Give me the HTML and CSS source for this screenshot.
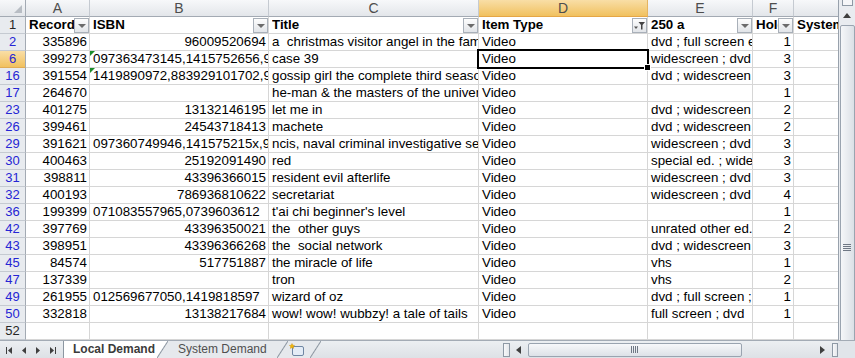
FILE: index.html
```html
<!DOCTYPE html>
<html lang="en">
<head>
    <meta charset="UTF-8">
    <title>Local Demand</title>
    <link rel="stylesheet" href="styles.css">
</head>
<body>
<div class="app">
    <div class="sheet">
        <div class="grid">
            <!-- column letters -->
            <div class="row letters">
                <div class="corner"></div>
                <div class="ch">A</div>
                <div class="ch">B</div>
                <div class="ch">C</div>
                <div class="ch on">D</div>
                <div class="ch">E</div>
                <div class="ch">F</div>
                <div class="ch">G</div>
            </div>
            <!-- header row -->
            <div class="row">
                <div class="rh dark">1</div>
                <div class="cell hd"><span class="t">Record</span><span class="fb"></span></div>
                <div class="cell hd"><span class="t">ISBN</span><span class="fb"></span></div>
                <div class="cell hd"><span class="t">Title</span><span class="fb"></span></div>
                <div class="cell hd"><span class="t">Item Type</span><span class="fb filt"><svg width="13" height="13" viewBox="0 0 13 13"><path d="M1 7.5h4l-2 2.5z" fill="#555"/><path d="M5.5 3h6.5l-2.5 3v4.5h-1.5v-4.5z" fill="#444"/></svg></span></div>
                <div class="cell hd"><span class="t">250 a</span><span class="fb"></span></div>
                <div class="cell hd"><span class="t">Holds</span><span class="fb"></span></div>
                <div class="cell hd"><span class="t">System Demand</span></div>
            </div>
            <div class="row">
                <div class="rh">2</div>
                <div class="cell num">335896</div>
                <div class="cell num">96009520694</div>
                <div class="cell">a  christmas visitor angel in the family</div>
                <div class="cell">Video</div>
                <div class="cell">dvd ; full screen edition</div>
                <div class="cell num">1</div>
                <div class="cell"></div>
            </div>
            <div class="row">
                <div class="rh on">6</div>
                <div class="cell num">399273</div>
                <div class="cell tri">097363473145,1415752656,9781415752657</div>
                <div class="cell">case 39</div>
                <div class="cell sel">Video</div>
                <div class="cell">widescreen ; dvd</div>
                <div class="cell num">3</div>
                <div class="cell"></div>
            </div>
            <div class="row">
                <div class="rh">16</div>
                <div class="cell num">391554</div>
                <div class="cell tri">1419890972,883929101702,9781419890973</div>
                <div class="cell">gossip girl the complete third season</div>
                <div class="cell">Video</div>
                <div class="cell">dvd ; widescreen</div>
                <div class="cell num">3</div>
                <div class="cell"></div>
            </div>
            <div class="row">
                <div class="rh">17</div>
                <div class="cell num">264670</div>
                <div class="cell"></div>
                <div class="cell">he-man &amp; the masters of the universe</div>
                <div class="cell">Video</div>
                <div class="cell"></div>
                <div class="cell num">1</div>
                <div class="cell"></div>
            </div>
            <div class="row">
                <div class="rh">23</div>
                <div class="cell num">401275</div>
                <div class="cell num">13132146195</div>
                <div class="cell">let me in</div>
                <div class="cell">Video</div>
                <div class="cell">dvd ; widescreen</div>
                <div class="cell num">2</div>
                <div class="cell"></div>
            </div>
            <div class="row">
                <div class="rh">26</div>
                <div class="cell num">399461</div>
                <div class="cell num">24543718413</div>
                <div class="cell">machete</div>
                <div class="cell">Video</div>
                <div class="cell">dvd ; widescreen</div>
                <div class="cell num">2</div>
                <div class="cell"></div>
            </div>
            <div class="row">
                <div class="rh">29</div>
                <div class="cell num">391621</div>
                <div class="cell">097360749946,141575215x,9781415752152</div>
                <div class="cell">ncis, naval criminal investigative service</div>
                <div class="cell">Video</div>
                <div class="cell">widescreen ; dvd</div>
                <div class="cell num">3</div>
                <div class="cell"></div>
            </div>
            <div class="row">
                <div class="rh">30</div>
                <div class="cell num">400463</div>
                <div class="cell num">25192091490</div>
                <div class="cell">red</div>
                <div class="cell">Video</div>
                <div class="cell">special ed. ; widescreen</div>
                <div class="cell num">3</div>
                <div class="cell"></div>
            </div>
            <div class="row">
                <div class="rh">31</div>
                <div class="cell num">398811</div>
                <div class="cell num">43396366015</div>
                <div class="cell">resident evil afterlife</div>
                <div class="cell">Video</div>
                <div class="cell">widescreen ; dvd</div>
                <div class="cell num">3</div>
                <div class="cell"></div>
            </div>
            <div class="row">
                <div class="rh">32</div>
                <div class="cell num">400193</div>
                <div class="cell num">786936810622</div>
                <div class="cell">secretariat</div>
                <div class="cell">Video</div>
                <div class="cell">widescreen ; dvd</div>
                <div class="cell num">4</div>
                <div class="cell"></div>
            </div>
            <div class="row">
                <div class="rh">36</div>
                <div class="cell num">199399</div>
                <div class="cell">071083557965,0739603612</div>
                <div class="cell">t'ai chi beginner's level</div>
                <div class="cell">Video</div>
                <div class="cell"></div>
                <div class="cell num">1</div>
                <div class="cell"></div>
            </div>
            <div class="row">
                <div class="rh">42</div>
                <div class="cell num">397769</div>
                <div class="cell num">43396350021</div>
                <div class="cell">the  other guys</div>
                <div class="cell">Video</div>
                <div class="cell">unrated other ed.</div>
                <div class="cell num">2</div>
                <div class="cell"></div>
            </div>
            <div class="row">
                <div class="rh">43</div>
                <div class="cell num">398951</div>
                <div class="cell num">43396366268</div>
                <div class="cell">the  social network</div>
                <div class="cell">Video</div>
                <div class="cell">dvd ; widescreen</div>
                <div class="cell num">3</div>
                <div class="cell"></div>
            </div>
            <div class="row">
                <div class="rh">45</div>
                <div class="cell num">84574</div>
                <div class="cell num">517751887</div>
                <div class="cell">the miracle of life</div>
                <div class="cell">Video</div>
                <div class="cell">vhs</div>
                <div class="cell num">1</div>
                <div class="cell"></div>
            </div>
            <div class="row">
                <div class="rh">47</div>
                <div class="cell num">137339</div>
                <div class="cell"></div>
                <div class="cell">tron</div>
                <div class="cell">Video</div>
                <div class="cell">vhs</div>
                <div class="cell num">2</div>
                <div class="cell"></div>
            </div>
            <div class="row">
                <div class="rh">49</div>
                <div class="cell num">261955</div>
                <div class="cell">012569677050,1419818597</div>
                <div class="cell">wizard of oz</div>
                <div class="cell">Video</div>
                <div class="cell">dvd ; full screen ; widescreen</div>
                <div class="cell num">1</div>
                <div class="cell"></div>
            </div>
            <div class="row">
                <div class="rh">50</div>
                <div class="cell num">332818</div>
                <div class="cell num">13138217684</div>
                <div class="cell">wow! wow! wubbzy! a tale of tails</div>
                <div class="cell">Video</div>
                <div class="cell">full screen ; dvd</div>
                <div class="cell num">1</div>
                <div class="cell"></div>
            </div>
            <div class="row">
                <div class="rh dark">52</div>
                <div class="cell"></div>
                <div class="cell"></div>
                <div class="cell"></div>
                <div class="cell"></div>
                <div class="cell"></div>
                <div class="cell"></div>
                <div class="cell"></div>
            </div>
        </div>
        <div class="vscroll">
            <div class="vsplit"></div>
            <div class="arrow-up"></div>
            <div class="vthumb"><span class="grip-h"></span></div>
        </div>
    </div>

    <div class="tabbar">
        <div class="nav">
            <svg width="63" height="17" viewBox="0 0 63 17">
                <g fill="#3f3f3f">
                    <rect x="6" y="6" width="1" height="7"/>
                    <path d="M12 6v7l-4-3.5z"/>
                    <path d="M26 6v7l-4-3.5z"/>
                    <path d="M36 6v7l4-3.5z"/>
                    <path d="M50 6v7l4-3.5z"/>
                    <rect x="55" y="6" width="1" height="7"/>
                </g>
            </svg>
        </div>
        <div class="tab active">Local Demand</div>
        <div class="tab other">System Demand</div>
        <div class="tab ins">
            <svg width="16" height="14" viewBox="0 0 16 14">
                <rect x="3.5" y="3.5" width="11" height="9" rx="1.5" fill="#e4ecf6" stroke="#6f86a3"/>
                <path d="M3 0.5l0.8 1.7 1.8 0.2-1.3 1.2 0.4 1.8-1.7-0.9-1.6 0.9 0.3-1.8-1.3-1.2 1.8-0.2z" fill="#f2b705" stroke="#c98b00" stroke-width="0.4"/>
            </svg>
        </div>
        <div class="spacer"></div>
        <div class="hscroll">
            <div class="hsplit"></div>
            <div class="arrow-left"></div>
            <div class="hthumb"><span class="grip-v"></span></div>
            <div class="arrow-right"></div>
            <div class="hsplit end"></div>
        </div>
        <div class="corner-box"></div>
    </div>
</div>
</body>
</html>
```

FILE: styles.css
```css
body {
    margin: 0;
    font-family: "Liberation Sans", Arial, sans-serif;
    background-color: #fff;
}
.app {
    width: 855px;
    height: 358px;
    overflow: hidden;
    display: flex;
    flex-direction: column;
}
.sheet {
    display: flex;
    height: 340px;
    flex: none;
}
.grid {
    width: 838px;
    overflow: hidden;
    flex: none;
}
.row {
    display: grid;
    grid-template-columns: 26px 64px 179px 210px 169px 105px 41px 140px;
    height: 17px;
}
/* column letters */
.corner,
.ch {
    box-sizing: border-box;
    height: 17px;
    background: linear-gradient(#f7f8fa, #e3e6ea);
    border-right: 1px solid #c5cad1;
    border-bottom: 1px solid #a3aab3;
    text-align: center;
    font-size: 14px;
    line-height: 16px;
    color: #4d4d4d;
}
.corner {
    position: relative;
    border-right-color: #a3aab3;
}
.corner::after {
    content: '';
    position: absolute;
    right: 3px;
    bottom: 3px;
    border-left: 8px solid transparent;
    border-bottom: 8px solid #b8bdc4;
}
.ch.on {
    background: linear-gradient(#f9dea6, #f1c15f);
    border-bottom-color: #e5a646;
    border-right-color: #e5b461;
}
/* row numbers */
.rh {
    box-sizing: border-box;
    background-color: #e8ebef;
    border-right: 1px solid #a3aab3;
    border-bottom: 1px solid #c5cad1;
    text-align: center;
    font-size: 13px;
    line-height: 16px;
    color: #2525d4;
}
.rh.dark {
    color: #262626;
}
.rh.on {
    background: linear-gradient(#f9dea6, #f1c15f);
    border-bottom-color: #e0ac55;
}
/* cells */
.cell {
    box-sizing: border-box;
    border-right: 1px solid #d6d6d6;
    border-bottom: 1px solid #d6d6d6;
    padding: 0 2px 0 3px;
    font-size: 13.33px;
    line-height: 16px;
    white-space: pre;
    overflow: hidden;
    color: #000;
}
.num {
    text-align: right;
}
.hd {
    display: flex;
    align-items: center;
    font-weight: bold;
    padding-right: 0;
}
.hd .t {
    flex: 1;
    min-width: 0;
    overflow: hidden;
}
.fb {
    flex: none;
    width: 15px;
    height: 15px;
    box-sizing: border-box;
    border: 1px solid #a9b0b9;
    background: linear-gradient(#fdfdfd, #e1e4e8);
    display: flex;
    align-items: center;
    justify-content: center;
}
.fb::after {
    content: '';
    border-left: 4px solid transparent;
    border-right: 4px solid transparent;
    border-top: 4px solid #6b6b6b;
    margin-top: 1px;
}
.fb.filt::after {
    display: none;
}
.tri {
    position: relative;
}
.tri::before {
    content: '';
    position: absolute;
    top: 0;
    left: 0;
    border-top: 5px solid #1c8c2a;
    border-right: 5px solid transparent;
}
.sel {
    position: relative;
    overflow: visible;
}
.sel::after {
    content: '';
    position: absolute;
    top: -2px;
    left: -2px;
    right: -2px;
    bottom: -2px;
    border: 2px solid #000;
    z-index: 2;
}
.sel::before {
    content: '';
    position: absolute;
    right: -4px;
    bottom: -4px;
    width: 5px;
    height: 5px;
    background-color: #000;
    border: 1px solid #fff;
    z-index: 3;
}
/* vertical scrollbar */
.vscroll {
    width: 17px;
    flex: none;
    box-sizing: border-box;
    background-color: #e9ecf0;
    border-left: 1px solid #98a1ac;
    display: flex;
    flex-direction: column;
    align-items: center;
    overflow: hidden;
}
.vsplit {
    flex: none;
    width: 11px;
    height: 6px;
    box-sizing: border-box;
    border: 1px solid #8e99a5;
    border-top: none;
    background-color: #f5f6f8;
}
.arrow-up {
    flex: none;
    margin-top: 7px;
    border-left: 4px solid transparent;
    border-right: 4px solid transparent;
    border-bottom: 5px solid #3f3f3f;
}
.vthumb {
    flex: none;
    margin-top: 7px;
    width: 15px;
    height: 444px;
    box-sizing: border-box;
    border: 1px solid #9aa4b0;
    border-radius: 2px;
    background: linear-gradient(to right, #f5f7f9, #dbe0e6);
    display: flex;
    align-items: center;
    justify-content: center;
}
.grip-h {
    width: 8px;
    height: 7px;
    background: repeating-linear-gradient(#6f7885 0 1px, transparent 1px 2px);
}
/* sheet tabs */
.tabbar {
    height: 18px;
    flex: none;
    box-sizing: border-box;
    display: flex;
    background: linear-gradient(#eceff2, #dde1e6);
    border-top: 1px solid #a3abb5;
    font-size: 12px;
}
.nav {
    width: 63px;
    flex: none;
}
.tab {
    position: relative;
    flex: none;
    box-sizing: border-box;
    line-height: 17px;
    white-space: nowrap;
}
.tab::after {
    content: '';
    position: absolute;
    top: 0;
    right: -11px;
    width: 11px;
    height: 100%;
}
.tab.active {
    width: 94px;
    padding-left: 9px;
    background-color: #fff;
    border-left: 1px solid #8c96a1;
    font-weight: bold;
    color: #3b3b3b;
    z-index: 3;
}
.tab.active::after {
    background: linear-gradient(to top left, transparent calc(50% - 1px), #8c96a1 50%, #fff calc(50% + 1px));
}
.tab.other {
    width: 120px;
    padding-left: 21px;
    background-color: #e6e9ed;
    color: #4f4f4f;
    z-index: 2;
}
.tab.other::after {
    background: linear-gradient(to top left, transparent calc(50% - 1px), #8c96a1 50%, #e6e9ed calc(50% + 1px));
}
.tab.ins {
    width: 33px;
    padding-left: 12px;
    background-color: #e6e9ed;
    z-index: 1;
    display: flex;
    align-items: center;
}
.tab.ins::after {
    background: linear-gradient(to top left, transparent calc(50% - 1px), #8c96a1 50%, #e6e9ed calc(50% + 1px));
}
.spacer {
    flex: 1;
}
/* horizontal scrollbar */
.hscroll {
    width: 335px;
    flex: none;
    display: flex;
    align-items: center;
}
.hsplit {
    flex: none;
    width: 7px;
    height: 14px;
    box-sizing: border-box;
    border: 1px solid #8e99a5;
    background: linear-gradient(to right, #f7f8fa, #e4e7eb);
}
.hsplit.end {
    width: 6px;
    margin-left: 7px;
}
.arrow-left {
    flex: none;
    margin-left: 6px;
    border-top: 4px solid transparent;
    border-bottom: 4px solid transparent;
    border-right: 5px solid #3f3f3f;
}
.arrow-right {
    flex: none;
    margin-left: auto;
    border-top: 4px solid transparent;
    border-bottom: 4px solid transparent;
    border-left: 5px solid #3f3f3f;
}
.hthumb {
    flex: none;
    margin-left: 7px;
    width: 214px;
    height: 14px;
    box-sizing: border-box;
    border: 1px solid #9aa4b0;
    border-radius: 2px;
    background: linear-gradient(#f7f8fa, #dde1e7);
    display: flex;
    align-items: center;
    justify-content: center;
}
.grip-v {
    width: 8px;
    height: 7px;
    background: repeating-linear-gradient(to right, #6f7885 0 1px, transparent 1px 2px);
}
.corner-box {
    width: 17px;
    flex: none;
    background-color: #e1e5ea;
}
```
